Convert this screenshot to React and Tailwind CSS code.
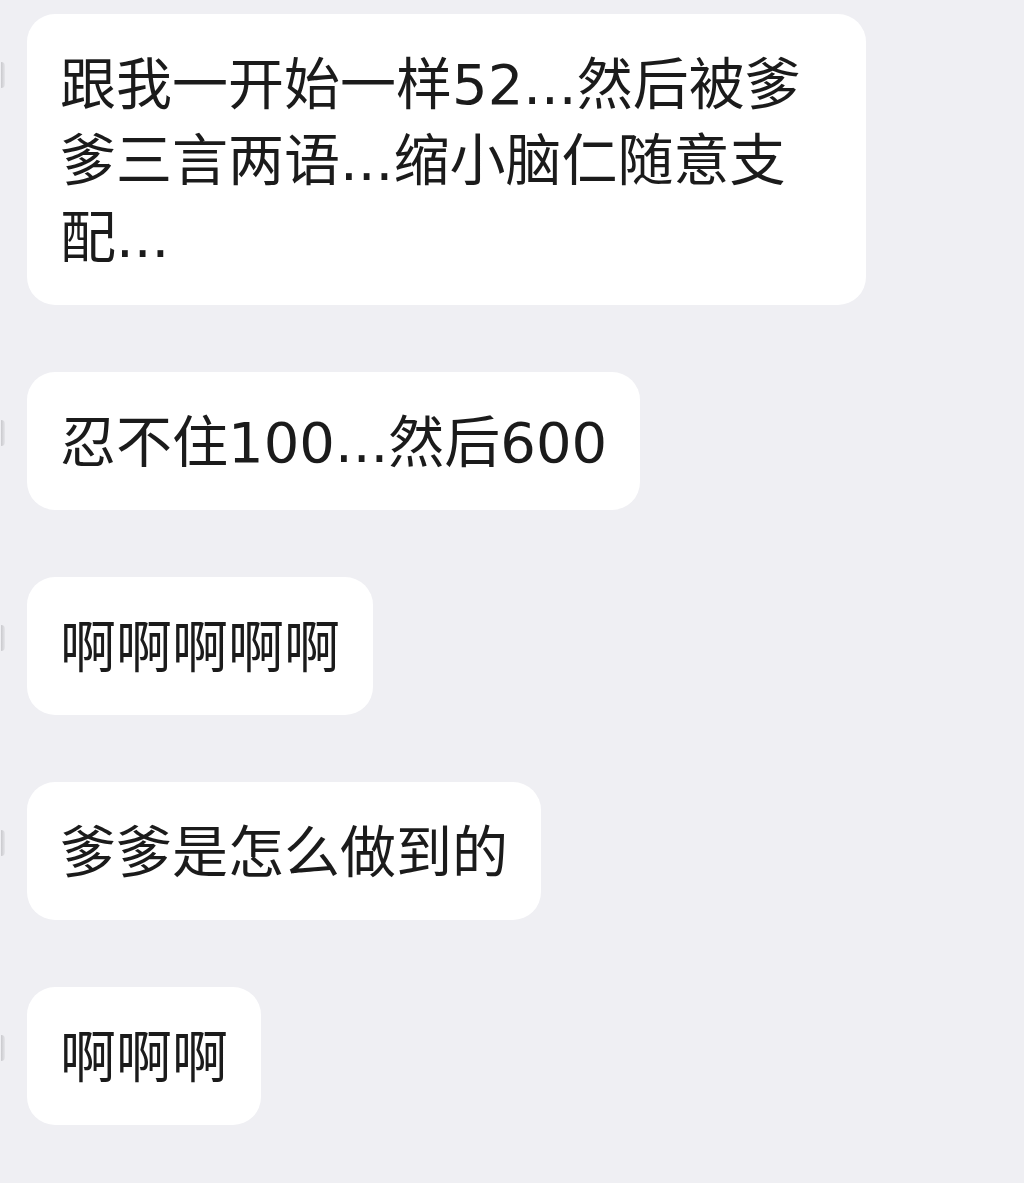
import React from "react";

const messages = [
  "跟我一开始一样52...然后被爹爹三言两语...缩小脑仁随意支配...",
  "忍不住100...然后600",
  "啊啊啊啊啊",
  "爹爹是怎么做到的",
  "啊啊啊",
];

export default function App() {
  return (
    <div
      className="w-[1024px] h-[1183px] bg-[#efeff3] pt-[14px] flex flex-col gap-[67px] overflow-hidden"
      style={{ fontFamily: '"DejaVu Sans", "Noto Sans CJK SC", sans-serif' }}
    >
      {messages.map((m, i) => (
        <div key={i} className="flex items-start">
          <div className="w-[27px] shrink-0 pt-[48px] pl-[1px]">
            <div className="w-[4px] h-[26px] rounded-r-full bg-gradient-to-r from-[#c9c9cd] to-[#e6e6ea]" />
          </div>
          <div className="max-w-[839px] bg-white rounded-[28px] pl-[33px] pr-[33px] pt-[32.5px] pb-[29px] text-[56px] leading-[76.5px] text-[#1b1b1b]">
            {m}
          </div>
        </div>
      ))}
    </div>
  );
}
